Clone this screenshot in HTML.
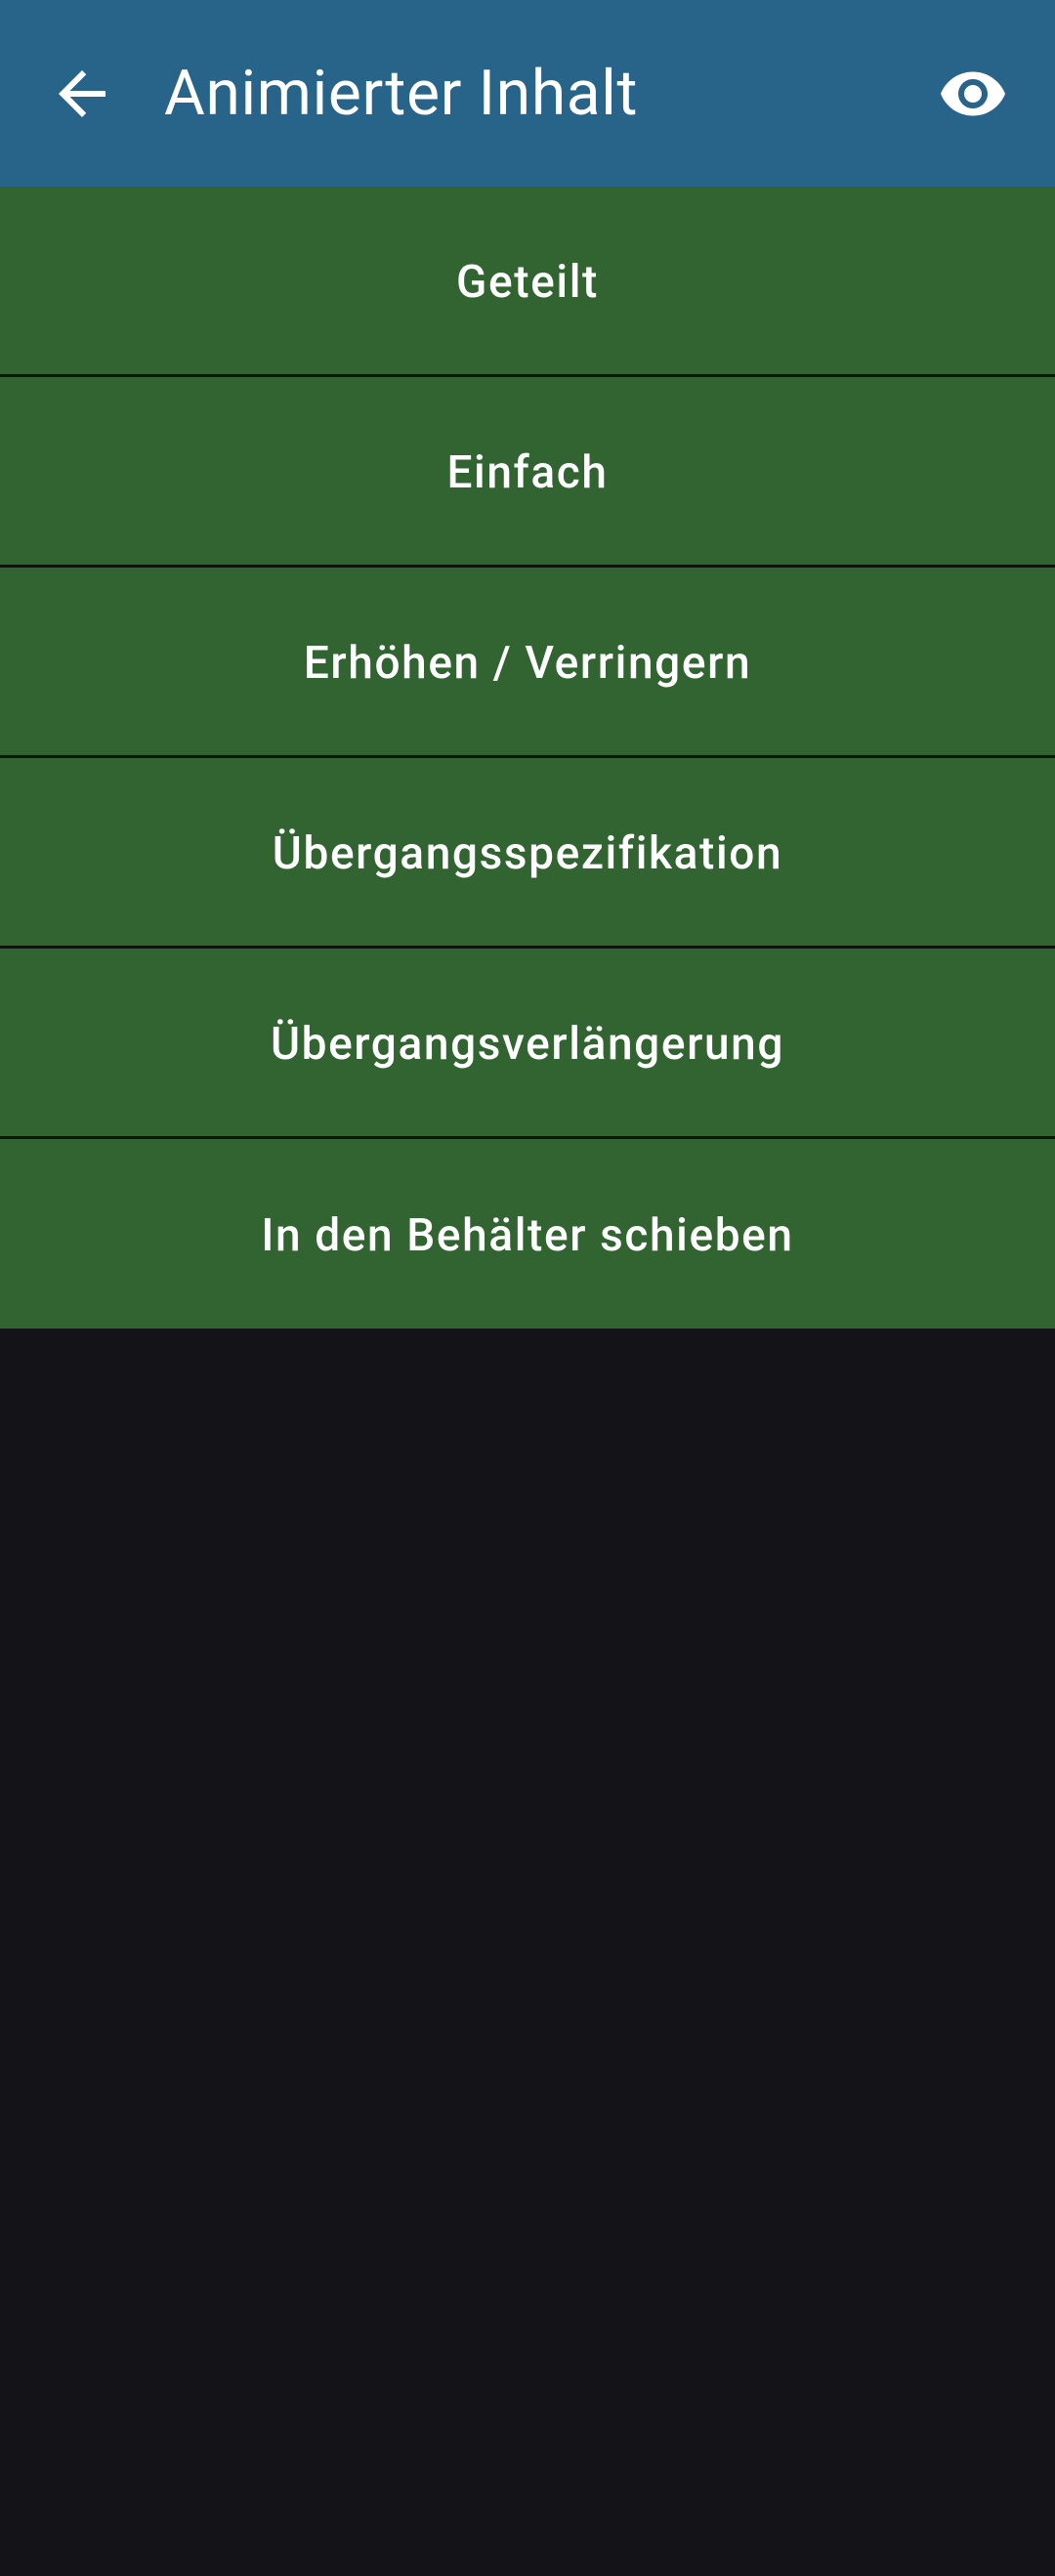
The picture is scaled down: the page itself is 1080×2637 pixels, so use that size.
<!DOCTYPE html>
<html><head><meta charset="utf-8"><style>
html,body{margin:0;padding:0;width:1080px;height:2637px;background:#141318;font-family:"Roboto","Liberation Sans",sans-serif;overflow:hidden}
.hdr{position:absolute;left:0;top:0;width:1080px;height:191px;background:#286489}
.title{position:absolute;left:168px;top:53px;font-size:64px;color:#fff;line-height:86px;letter-spacing:0.7px}
.list{position:absolute;top:191px;left:0;width:1080px}
.row{height:192px;background:#326432;border-bottom:3px solid #0e130e;display:flex;align-items:center;justify-content:center;color:#fff;font-size:46px;font-weight:500;letter-spacing:1.6px;padding-top:3px;box-sizing:border-box}
.row{height:195px}
.row:last-child{border-bottom:none;height:194px}
</style></head><body>
<div class="hdr">
<svg style="position:absolute;left:48px;top:60px" width="72" height="72" viewBox="0 0 24 24"><path fill="#fff" d="M20 11H7.830l5.59-5.59L12 4l-8 8 8 8 1.41-1.41L7.83 13H20v-2z"/></svg>
<div class="title">Animierter Inhalt</div>
<svg style="position:absolute;left:960px;top:60px" width="72" height="72" viewBox="0 0 24 24"><path fill="#fff" d="M12 4.5C7 4.5 2.730 7.61 1 12c1.73 4.39 6 7.5 11 7.5s9.27-3.11 11-7.5c-1.73-4.39-6-7.5-11-7.5zM12 17c-2.76 0-5-2.24-5-5s2.24-5 5-5 5 2.24 5 5-2.24 5-5 5zm0-8c-1.66 0-3 1.34-3 3s1.34 3 3 3 3-1.34 3-3-1.34-3-3-3z"/></svg>
</div>
<div class="list">
<div class="row">Geteilt</div>
<div class="row">Einfach</div>
<div class="row">Erhöhen / Verringern</div>
<div class="row">Übergangsspezifikation</div>
<div class="row">Übergangsverlängerung</div>
<div class="row">In den Behälter schieben</div>
</div>
</body></html>
